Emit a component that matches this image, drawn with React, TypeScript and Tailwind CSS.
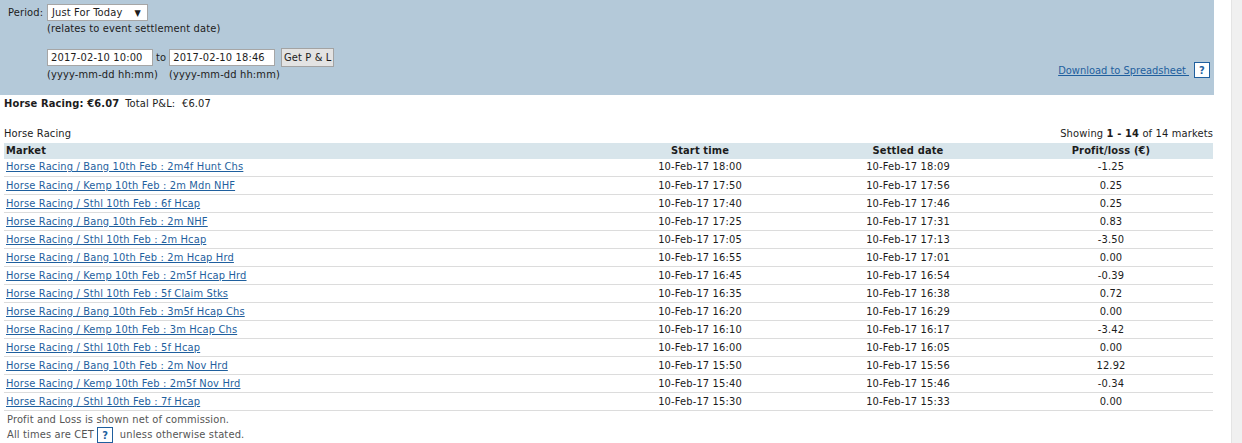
type RowData = {
  market: string;
  start: string;
  settled: string;
  pl: string;
};

const rows: RowData[] = [
  { market: "Horse Racing / Bang 10th Feb : 2m4f Hunt Chs", start: "10-Feb-17 18:00", settled: "10-Feb-17 18:09", pl: "-1.25" },
  { market: "Horse Racing / Kemp 10th Feb : 2m Mdn NHF", start: "10-Feb-17 17:50", settled: "10-Feb-17 17:56", pl: "0.25" },
  { market: "Horse Racing / Sthl 10th Feb : 6f Hcap", start: "10-Feb-17 17:40", settled: "10-Feb-17 17:46", pl: "0.25" },
  { market: "Horse Racing / Bang 10th Feb : 2m NHF", start: "10-Feb-17 17:25", settled: "10-Feb-17 17:31", pl: "0.83" },
  { market: "Horse Racing / Sthl 10th Feb : 2m Hcap", start: "10-Feb-17 17:05", settled: "10-Feb-17 17:13", pl: "-3.50" },
  { market: "Horse Racing / Bang 10th Feb : 2m Hcap Hrd", start: "10-Feb-17 16:55", settled: "10-Feb-17 17:01", pl: "0.00" },
  { market: "Horse Racing / Kemp 10th Feb : 2m5f Hcap Hrd", start: "10-Feb-17 16:45", settled: "10-Feb-17 16:54", pl: "-0.39" },
  { market: "Horse Racing / Sthl 10th Feb : 5f Claim Stks", start: "10-Feb-17 16:35", settled: "10-Feb-17 16:38", pl: "0.72" },
  { market: "Horse Racing / Bang 10th Feb : 3m5f Hcap Chs", start: "10-Feb-17 16:20", settled: "10-Feb-17 16:29", pl: "0.00" },
  { market: "Horse Racing / Kemp 10th Feb : 3m Hcap Chs", start: "10-Feb-17 16:10", settled: "10-Feb-17 16:17", pl: "-3.42" },
  { market: "Horse Racing / Sthl 10th Feb : 5f Hcap", start: "10-Feb-17 16:00", settled: "10-Feb-17 16:05", pl: "0.00" },
  { market: "Horse Racing / Bang 10th Feb : 2m Nov Hrd", start: "10-Feb-17 15:50", settled: "10-Feb-17 15:56", pl: "12.92" },
  { market: "Horse Racing / Kemp 10th Feb : 2m5f Nov Hrd", start: "10-Feb-17 15:40", settled: "10-Feb-17 15:46", pl: "-0.34" },
  { market: "Horse Racing / Sthl 10th Feb : 7f Hcap", start: "10-Feb-17 15:30", settled: "10-Feb-17 15:33", pl: "0.00" },
];

function HelpBox() {
  return (
    <span className="inline-flex h-[16px] w-[16px] items-center justify-center border-[1.5px] border-[#1f5f9e] bg-white text-[11px] font-bold leading-none text-[#1f5f9e]">
      ?
    </span>
  );
}

function FilterPanel() {
  return (
    <div className="flex h-[95px] items-start justify-between bg-[#b4c9d9] pl-[8px] pr-[4px]">
      <div className="flex flex-col">
        <div className="mt-[4px] flex items-center">
          <span className="w-[39px]">Period:</span>
          <div className="flex h-[17px] w-[101px] items-center justify-between border border-[#a6a6a6] bg-white pl-[4px] pr-[6px]">
            <span>Just For Today</span>
            <span className="text-[9px]">▼</span>
          </div>
        </div>
        <div className="ml-[39px] mt-[1px] leading-[14px]">(relates to event settlement date)</div>
        <div className="ml-[39px] mt-[12px] flex items-center">
          <div className="flex h-[17px] w-[106px] items-center border border-[#a6a6a6] bg-white pl-[3px]">2017-02-10 10:00</div>
          <span className="mx-[3px]">to</span>
          <div className="flex h-[17px] w-[106px] items-center border border-[#a6a6a6] bg-white pl-[3px]">2017-02-10 18:46</div>
          <div className="ml-[6px] flex h-[19px] w-[53px] items-center justify-center border border-[#a3a3a3] bg-[#e3e3e3]">Get P &amp; L</div>
        </div>
        <div className="ml-[39px] mt-[1px] flex leading-[14px]">
          <span className="w-[122px]">(yyyy-mm-dd hh:mm)</span>
          <span>(yyyy-mm-dd hh:mm)</span>
        </div>
      </div>
      <div className="mt-[62px] flex items-center gap-[5px]">
        <span className="pt-[1px] tracking-normal text-[#1f5f9e] underline">Download to Spreadsheet&nbsp;</span>
        <HelpBox />
      </div>
    </div>
  );
}

function MarketTable() {
  return (
    <table className="ml-[4px] mt-[2px] w-[1209px] table-fixed border-collapse">
      <colgroup>
        <col className="w-[589px]" />
        <col className="w-[214px]" />
        <col className="w-[202px]" />
        <col className="w-[204px]" />
      </colgroup>
      <thead>
        <tr className="h-[16px] bg-[#d8e5eb] font-bold">
          <th className="pl-[2px] text-left">Market</th>
          <th className="text-center">Start time</th>
          <th className="text-center">Settled date</th>
          <th className="text-center">Profit/loss (€)</th>
        </tr>
      </thead>
      <tbody>
        {rows.map((r) => (
          <tr key={r.market} className="h-[18px] border-b border-[#dcdcdc]">
            <td className="pl-[2px]">
              <span className="text-[#1f5f9e] underline">{r.market}</span>
            </td>
            <td className="text-center">{r.start}</td>
            <td className="text-center">{r.settled}</td>
            <td className="text-center">{r.pl}</td>
          </tr>
        ))}
      </tbody>
    </table>
  );
}

export default function App() {
  return (
    <div
      className="flex h-screen bg-white text-[11px] leading-[14px] text-[#1c1c1c]"
      style={{ fontFamily: '"DejaVu Sans", Tahoma, sans-serif', fontStretch: "condensed", letterSpacing: "0.15px" }}
    >
      <div className="flex w-[1214px] flex-col">
        <FilterPanel />
        <div className="ml-[4px] mt-[2px]">
          <span className="font-bold">Horse Racing: €6.07</span>
          <span className="ml-[6px]">Total P&amp;L:&nbsp; €6.07</span>
        </div>
        <div className="mt-[16px] flex justify-between pl-[4px] pr-[1px]">
          <span>Horse Racing</span>
          <span>
            Showing <b>1 - 14</b> of 14 markets
          </span>
        </div>
        <MarketTable />
        <div className="ml-[7px] mt-[2px] text-[#555]">
          <div>Profit and Loss is shown net of commission.</div>
          <div className="flex items-center">
            All times are CET&nbsp;<HelpBox />&nbsp;&nbsp;unless otherwise stated.
          </div>
        </div>
      </div>
      <div className="w-[17px]" />
      <div className="flex-1 border-l border-[#e4e4e4] bg-[#f0f0f0]" />
    </div>
  );
}
